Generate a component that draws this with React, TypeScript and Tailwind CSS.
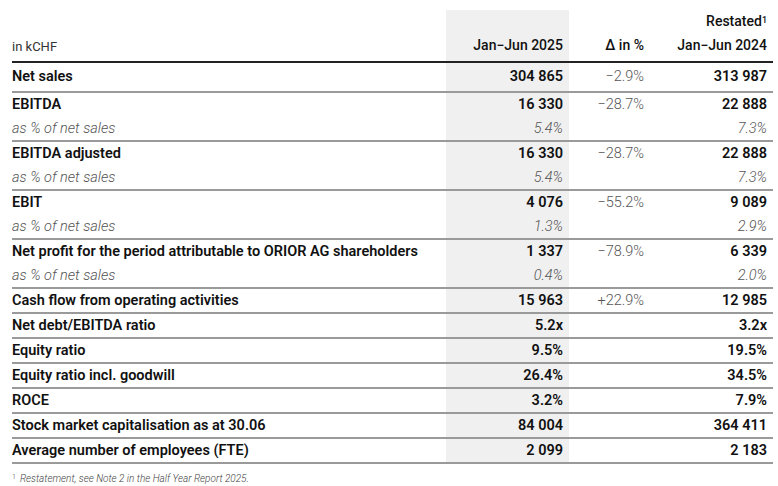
const COLS = "grid grid-cols-[434px_123px_81px_123px]";

type Row = {
  label: string;
  cur: string;
  delta?: string;
  prev: string;
  sub?: { cur: string; prev: string };
  h?: string;
};

const ROWS: Row[] = [
  { label: "Net sales", cur: "304 865", delta: "−2.9%", prev: "313 987", h: "h-[28px]" },
  { label: "EBITDA", cur: "16 330", delta: "−28.7%", prev: "22 888", sub: { cur: "5.4%", prev: "7.3%" } },
  { label: "EBITDA adjusted", cur: "16 330", delta: "−28.7%", prev: "22 888", sub: { cur: "5.4%", prev: "7.3%" } },
  { label: "EBIT", cur: "4 076", delta: "−55.2%", prev: "9 089", sub: { cur: "1.3%", prev: "2.9%" } },
  {
    label: "Net profit for the period attributable to ORIOR AG shareholders",
    cur: "1 337",
    delta: "−78.9%",
    prev: "6 339",
    sub: { cur: "0.4%", prev: "2.0%" },
  },
  { label: "Cash flow from operating activities", cur: "15 963", delta: "+22.9%", prev: "12 985" },
  { label: "Net debt/EBITDA ratio", cur: "5.2x", prev: "3.2x" },
  { label: "Equity ratio", cur: "9.5%", prev: "19.5%" },
  { label: "Equity ratio incl. goodwill", cur: "26.4%", prev: "34.5%" },
  { label: "ROCE", cur: "3.2%", prev: "7.9%" },
  { label: "Stock market capitalisation as at 30.06", cur: "84 004", prev: "364 411" },
  { label: "Average number of employees (FTE)", cur: "2 099", prev: "2 183" },
];

function Line({
  label,
  cur,
  delta,
  prev,
  h,
  italic,
}: {
  label: string;
  cur: string;
  delta?: string;
  prev: string;
  h: string;
  italic?: boolean;
}) {
  const val = italic ? "font-light italic text-[#555]" : "font-semibold text-[#111]";
  return (
    <div className={`${COLS} ${h} items-stretch text-[14.5px]`}>
      <div className={`flex items-center ${val}`}>{label}</div>
      <div className={`flex items-center justify-end bg-[#f0f0f0] pr-1.5 ${val}`}>{cur}</div>
      <div className="flex items-center justify-end pr-1.5 font-light text-[#555]">{delta}</div>
      <div className={`flex items-center justify-end pr-1.5 ${val}`}>{prev}</div>
    </div>
  );
}

export default function App() {
  return (
    <div className="min-h-[486px] w-[778px] bg-white pt-[10px] pl-3 font-['Roboto',sans-serif] text-[14px]">
      <div className="w-[761px]">
        <div className={`${COLS} h-[22px]`}>
          <div />
          <div className="bg-[#f0f0f0]" />
          <div />
          <div className="flex items-center justify-end pr-1.5 font-medium text-[#111]">
            Restated<sup className="relative top-[-1px] text-[9px] align-super">1</sup>
          </div>
        </div>
        <div className={`${COLS} h-[31px] border-b-2 border-[#222]`}>
          <div className="flex items-end pb-[5px] text-[13px] text-[#333]">in kCHF</div>
          <div className="flex items-end justify-end bg-[#f0f0f0] pb-[5px] pr-1.5 font-medium text-[#111]">
            Jan−Jun 2025
          </div>
          <div className="flex items-end justify-end pb-[5px] pr-1.5 font-medium text-[#111]">Δ in %</div>
          <div className="flex items-end justify-end pb-[5px] pr-1.5 font-medium text-[#111]">Jan−Jun 2024</div>
        </div>
        {ROWS.map((r) => (
          <div key={r.label} className="border-b-2 border-[#9a9a9a]">
            <Line label={r.label} cur={r.cur} delta={r.delta} prev={r.prev} h={r.h ?? (r.sub ? "h-[24px]" : "h-[23px]")} />
            {r.sub && <Line label="as % of net sales" cur={r.sub.cur} prev={r.sub.prev} h="h-[23px]" italic />}
          </div>
        ))}
        <p className="mt-[7px] text-[10px] font-light italic text-[#444]">
          <sup className="mr-1 not-italic text-[7px]">1</sup>Restatement, see Note 2 in the Half Year Report 2025.
        </p>
      </div>
    </div>
  );
}
